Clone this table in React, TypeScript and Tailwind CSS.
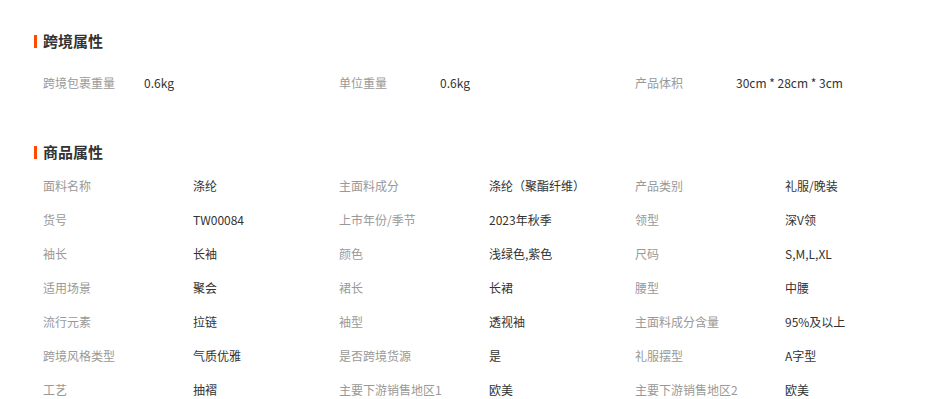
import React from "react";

const cross: [string, string][] = [
  ["跨境包裹重量", "0.6kg"],
  ["单位重量", "0.6kg"],
  ["产品体积", "30cm * 28cm * 3cm"],
];

const goods: [string, string][] = [
  ["面料名称", "涤纶"],
  ["主面料成分", "涤纶（聚酯纤维）"],
  ["产品类别", "礼服/晚装"],
  ["货号", "TW00084"],
  ["上市年份/季节", "2023年秋季"],
  ["领型", "深V领"],
  ["袖长", "长袖"],
  ["颜色", "浅绿色,紫色"],
  ["尺码", "S,M,L,XL"],
  ["适用场景", "聚会"],
  ["裙长", "长裙"],
  ["腰型", "中腰"],
  ["流行元素", "拉链"],
  ["袖型", "透视袖"],
  ["主面料成分含量", "95%及以上"],
  ["跨境风格类型", "气质优雅"],
  ["是否跨境货源", "是"],
  ["礼服摆型", "A字型"],
  ["工艺", "抽褶"],
  ["主要下游销售地区1", "欧美"],
  ["主要下游销售地区2", "欧美"],
];

function Title({ text }: { text: string }) {
  return (
    <div className="flex items-center h-[20px]">
      <div className="w-[3px] h-[13px] bg-[#ff4a00]" />
      <div className="ml-[6px] text-[15px] font-bold text-[#333] leading-[20px]">{text}</div>
    </div>
  );
}

function Grid({ items, labelW }: { items: [string, string][]; labelW: string }) {
  return (
    <div className="grid grid-cols-[296px_296px_296px] pl-[9px]">
      {items.map(([k, v], i) => (
        <div key={i} className="flex items-center h-[34px] text-[12px]">
          <div className={`${labelW} shrink-0 text-[#999]`}>{k}</div>
          <div className="text-[#333]">{v}</div>
        </div>
      ))}
    </div>
  );
}

export default function App() {
  return (
    <div
      className="w-[926px] h-[399px] overflow-hidden bg-white pl-[34px] pt-[31px]"
      style={{ fontFamily: '"Noto Sans CJK SC", "Liberation Sans", sans-serif' }}
    >
      <Title text="跨境属性" />
      <div className="mt-[15px]">
        <Grid items={cross} labelW="w-[101px]" />
      </div>
      <div className="mt-[42px]">
        <Title text="商品属性" />
      </div>
      <div className="mt-[7px]">
        <Grid items={goods} labelW="w-[150px]" />
      </div>
    </div>
  );
}
